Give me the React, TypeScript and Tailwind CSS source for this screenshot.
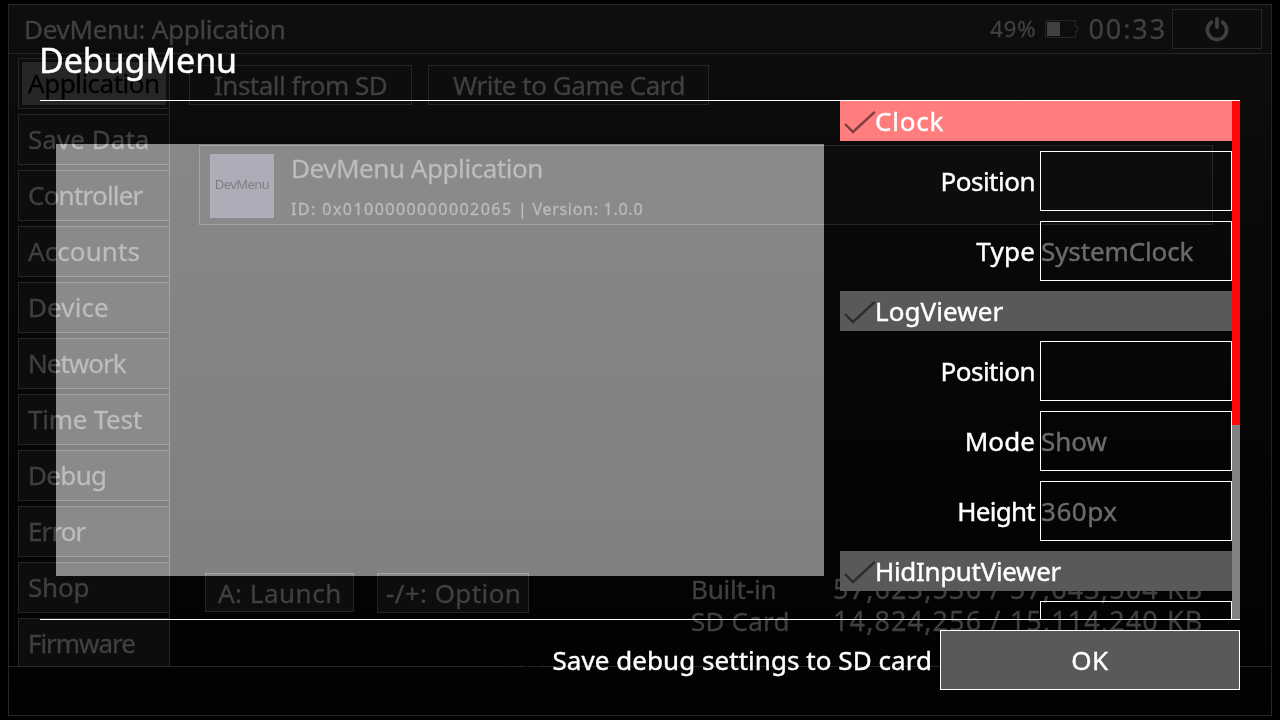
import React from "react";

const tabs = [
  { name: "Application", tracking: "tracking-[-0.48px]", selected: true },
  { name: "Save Data", tracking: "tracking-[0.05px]" },
  { name: "Controller", tracking: "tracking-[-0.78px]" },
  { name: "Accounts", tracking: "tracking-[0.1px]" },
  { name: "Device", tracking: "tracking-[0.1px]" },
  { name: "Network", tracking: "tracking-[-1px]" },
  { name: "Time Test", tracking: "tracking-[-0.25px]" },
  { name: "Debug", tracking: "tracking-[-0.65px]" },
  { name: "Error", tracking: "tracking-[-0.9px]" },
  { name: "Shop", tracking: "tracking-[-0.19px]" },
  { name: "Firmware", tracking: "tracking-[-1.05px]" },
];

function CheckMark() {
  return (
    <svg viewBox="0 0 35 40" className="h-10 w-[35px] shrink-0 overflow-visible">
      <path d="M5 23 L13 31 L34.8 10.9" fill="none" stroke="#000" strokeOpacity="0.5" strokeWidth="2.4" />
    </svg>
  );
}

function PowerIcon() {
  return (
    <svg viewBox="0 0 24 26" className="h-[26px] w-6" fill="none" stroke="#404040" strokeLinecap="round">
      <path d="M6.4 6.2 A9.6 9.6 0 1 0 17.6 6.2" strokeWidth="3.6" />
      <path d="M12 2.8 V11" strokeWidth="3.8" />
    </svg>
  );
}

function Battery() {
  return (
    <svg viewBox="0 0 34 18" className="h-[18px] w-[34px]">
      <path d="M0.5 0.5 H30.5 V6.5 H32.5 V11.5 H30.5 V17.5 H0.5 Z" fill="none" stroke="#262626" />
      <rect x="2" y="2" width="13" height="14" fill="#404040" />
    </svg>
  );
}

function Group({ name, tracking, focused = false }: { name: string; tracking: string; focused?: boolean }) {
  return (
    <div className={`flex h-10 shrink-0 items-center ${focused ? "bg-[#ff7d7d]" : "bg-[#595959]"}`}>
      <CheckMark />
      <span className={tracking}>{name}</span>
    </div>
  );
}

function Field({ label, tracking, value, valueTracking = "" }: { label: string; tracking: string; value?: string; valueTracking?: string }) {
  return (
    <div className="flex h-[60px] shrink-0 items-center">
      <span className={`flex-1 pr-[5px] text-right ${tracking}`}>{label}</span>
      <div className="flex h-[60px] w-48 items-center border border-white">
        <span className={`text-[#6b6b6b] ${valueTracking}`}>{value}</span>
      </div>
    </div>
  );
}

function DevMenu() {
  return (
    <div className="h-[720px] w-[1280px] px-2 pt-1 text-[#404040] [-webkit-text-stroke:0.3px_currentColor]">
      <div className="flex h-[712px] flex-col border border-[#262626] bg-gradient-to-b from-[#0e0e0e] to-[#020202]">
        <header className="flex h-[49px] items-center border-b border-[#262626] pr-[9px] pl-[15px]">
          <h1 className="flex-1 tracking-[-0.3px]">DevMenu: Application</h1>
          <span className="mr-[9px] -mt-[2px] text-[22px] tracking-[0.9px]">49%</span>
          <Battery />
          <span className="ml-[9px] text-[27px] tracking-[1.9px]">00:33</span>
          <div className="ml-[5px] flex h-10 w-[90px] items-center justify-center border border-[#262626] bg-[#0d0d0d]">
            <PowerIcon />
          </div>
        </header>
        <div className="flex h-[613px] border-b border-[#262626]">
          <nav className="flex w-[161px] flex-col gap-[5px] overflow-hidden border-r border-[#262626] pt-1 pl-[9px]">
            {tabs.map((tab) => (
              <div key={tab.name} className="flex h-[51px] shrink-0 border border-r-0 border-[#262626] bg-[#0d0d0d] p-[3px]">
                <div className={`flex h-[43px] w-36 items-center pl-1.5 whitespace-nowrap ${tab.tracking} ${tab.selected ? "bg-[#262626] text-black" : ""}`}>
                  {tab.name}
                </div>
              </div>
            ))}
          </nav>
          <main className="flex flex-1 flex-col">
            <div className="flex gap-4 pt-[11px] pl-[19px]">
              <div className="h-10 w-[223px] border border-[#262626] bg-[#0d0d0d] pl-6 leading-[39px] tracking-[-0.5px]">Install from SD</div>
              <div className="h-10 w-[281px] border border-[#262626] bg-[#0d0d0d] pl-6 leading-[39px] tracking-[-0.47px]">Write to Game Card</div>
            </div>
            <div className="mt-10 ml-[29px] flex h-20 w-[1014px] border border-[#262626] bg-[#0d0d0d] pt-2 pl-[10px]">
              <div className="flex size-16 items-center justify-center bg-[#312f3b] pb-0.5 text-[13px] tracking-[-0.55px] text-black [-webkit-text-stroke:0px]">DevMenu</div>
              <div className="ml-[17px] flex flex-col">
                <div className="h-8 leading-[28px] tracking-[-0.45px]">DevMenu Application</div>
                <div className="mt-[11px] flex text-[16px] leading-6">
                  <span className="w-[227px] tracking-[1.45px]">ID: 0x0100000000002065</span>
                  <span className="tracking-[0.72px]">| Version: 1.0.0</span>
                </div>
              </div>
            </div>
            <div className="mt-auto flex h-[93px] pl-[35px]">
              <div className="h-[39px] w-[149px] border border-[#262626] bg-[#0d0d0d] pl-3 leading-[38px] tracking-[0.5px]">A: Launch</div>
              <div className="ml-[23px] h-10 w-[152px] border border-[#262626] bg-[#0d0d0d] pl-2 leading-[39px] tracking-[0.4px]">-/+: Option</div>
              <div className="ml-[162px] w-[142px] leading-8">
                <div className="tracking-[-0.2px]">Built-in</div>
                <div className="tracking-[0.2px]">SD Card</div>
              </div>
              <div className="text-[27px] leading-8 tracking-[1.12px] whitespace-nowrap">
                <div>57,623,536 / 57,643,504 KB</div>
                <div>14,824,256 / 15,114,240 KB</div>
              </div>
            </div>
          </main>
        </div>
      </div>
    </div>
  );
}

function DebugMenu() {
  return (
    <div className="absolute inset-0 flex flex-col px-10 text-white [-webkit-text-stroke:0.4px_currentColor]">
      <h2 className="h-[101px] border-b border-white pt-[35px] -indent-px text-[34px] leading-[51px] tracking-[-0.1px]">DebugMenu</h2>
      <section className="flex h-[518px]">
        <div className="mt-[43px] ml-4 h-[432px] w-[768px] bg-[#7d7d7d] mix-blend-plus-lighter" />
        <div className="ml-4 flex w-[392px] flex-col gap-2.5 overflow-hidden">
          <Group name="Clock" tracking="tracking-[0.79px]" focused />
          <Field label="Position" tracking="tracking-[-0.5px]" />
          <Field label="Type" tracking="tracking-[0.2px]" value="SystemClock" valueTracking="tracking-[-0.12px]" />
          <Group name="LogViewer" tracking="tracking-[0.08px]" />
          <Field label="Position" tracking="tracking-[-0.5px]" />
          <Field label="Mode" tracking="tracking-[0.1px]" value="Show" valueTracking="tracking-[0px]" />
          <Field label="Height" tracking="tracking-[-0.74px]" value="360px" valueTracking="tracking-[0.55px]" />
          <Group name="HidInputViewer" tracking="tracking-[-0.33px]" />
          <Field label="" tracking="" />
        </div>
        <div className="w-2 bg-[#828282]">
          <div className="h-[324px] bg-[#ff0a0a]" />
        </div>
      </section>
      <footer className="flex items-center justify-end border-t border-white pt-2.5">
        <CheckMark />
        <span className="pr-2 tracking-[0.05px]">Save debug settings to SD card</span>
        <div className="flex h-[60px] w-[300px] items-center justify-center border border-white bg-[#595959] tracking-[0.6px]">OK</div>
      </footer>
    </div>
  );
}

export default function App() {
  return (
    <div className="relative h-[720px] w-[1280px] overflow-hidden bg-black font-['Noto_Sans',sans-serif] text-[26px]">
      <DevMenu />
      <DebugMenu />
    </div>
  );
}
